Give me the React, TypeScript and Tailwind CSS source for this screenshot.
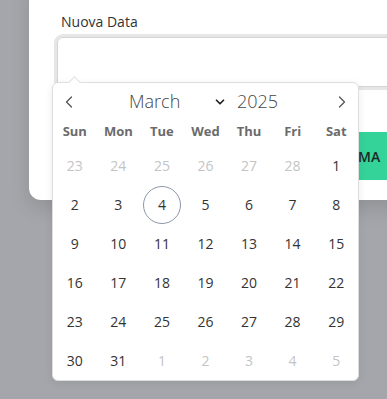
import { ChevronLeft, ChevronRight, ChevronDown } from 'lucide-react';

const weekDays = ['Sun', 'Mon', 'Tue', 'Wed', 'Thu', 'Fri', 'Sat'];

type Day = { n: number; out?: boolean };

const days: Day[] = [
  ...[23, 24, 25, 26, 27, 28].map(n => ({ n, out: true })),
  ...Array.from({ length: 31 }, (_, i) => ({ n: i + 1 })),
  ...[1, 2, 3, 4, 5].map(n => ({ n, out: true })),
];

export default function App() {
  return (
    <div
      className="w-[387px] h-[399px] overflow-hidden bg-[#a5a6ab]"
      style={{ fontFamily: '"Open Sans", "Noto Sans", sans-serif' }}
    >
      <div className="ml-[29px] mt-[-20px] w-[420px] h-[220px] bg-white rounded-b-xl shadow-[0_8px_20px_rgba(0,0,0,0.12)] pt-[32px] pl-[28px]">
        <div className="pl-1 text-[14px] leading-[20px] text-[#333]">Nuova Data</div>

        <div className="relative mt-[5px]">
          <div className="h-[50px] w-[340px] rounded-md border border-[#d4d4d4] ring-[3px] ring-[#e6e6e6]" />

          {/* calendario */}
          <div className="absolute left-[-5px] top-[45px] z-10 w-[307px] rounded-md border border-[#dedede] bg-white shadow-[0_2px_8px_rgba(0,0,0,0.08)]">
            <div className="absolute -top-[5px] left-[17px] w-[9px] h-[9px] rotate-45 bg-white border-l border-t border-[#dedede]" />
            <div className="flex items-center h-[35px] pt-[2px] text-[#444]">
              <ChevronLeft className="w-5 h-5 ml-[6px] text-[#555]" strokeWidth={1.5} />
              <div className="flex items-center ml-[50px] w-[98px]">
                <span className="text-[18px] font-light">March</span>
                <ChevronDown className="w-[14px] h-[14px] ml-auto text-[#222]" strokeWidth={3} />
              </div>
              <span className="ml-[10px] text-[18px] font-light">2025</span>
              <ChevronRight className="w-5 h-5 ml-auto mr-[6px] text-[#555]" strokeWidth={1.5} />
            </div>
            <div className="grid grid-cols-7 h-[28px] items-center">
              {weekDays.map(d => (
                <div key={d} className="text-center text-[13px] font-bold text-[#6b6b6b]">
                  {d}
                </div>
              ))}
            </div>
            <div className="grid grid-cols-7">
              {days.map((d, i) => (
                <div key={i} className="h-[39px] flex items-center justify-center">
                  <span
                    className={
                      'flex items-center justify-center w-[38px] h-[38px] rounded-full text-[14px] ' +
                      (d.out ? 'text-[#c4c4c4] ' : 'text-[#333] ') +
                      (!d.out && d.n === 4 ? 'border border-[#8e97a8]' : '')
                    }
                  >
                    {d.n}
                  </span>
                </div>
              ))}
            </div>
          </div>
        </div>

        <button className="mt-[45px] ml-[230px] h-[48px] px-4 bg-[#34d399] text-[#1b2a25] text-[14px] font-semibold rounded">
          CONFERMA
        </button>
      </div>
    </div>
  );
}
